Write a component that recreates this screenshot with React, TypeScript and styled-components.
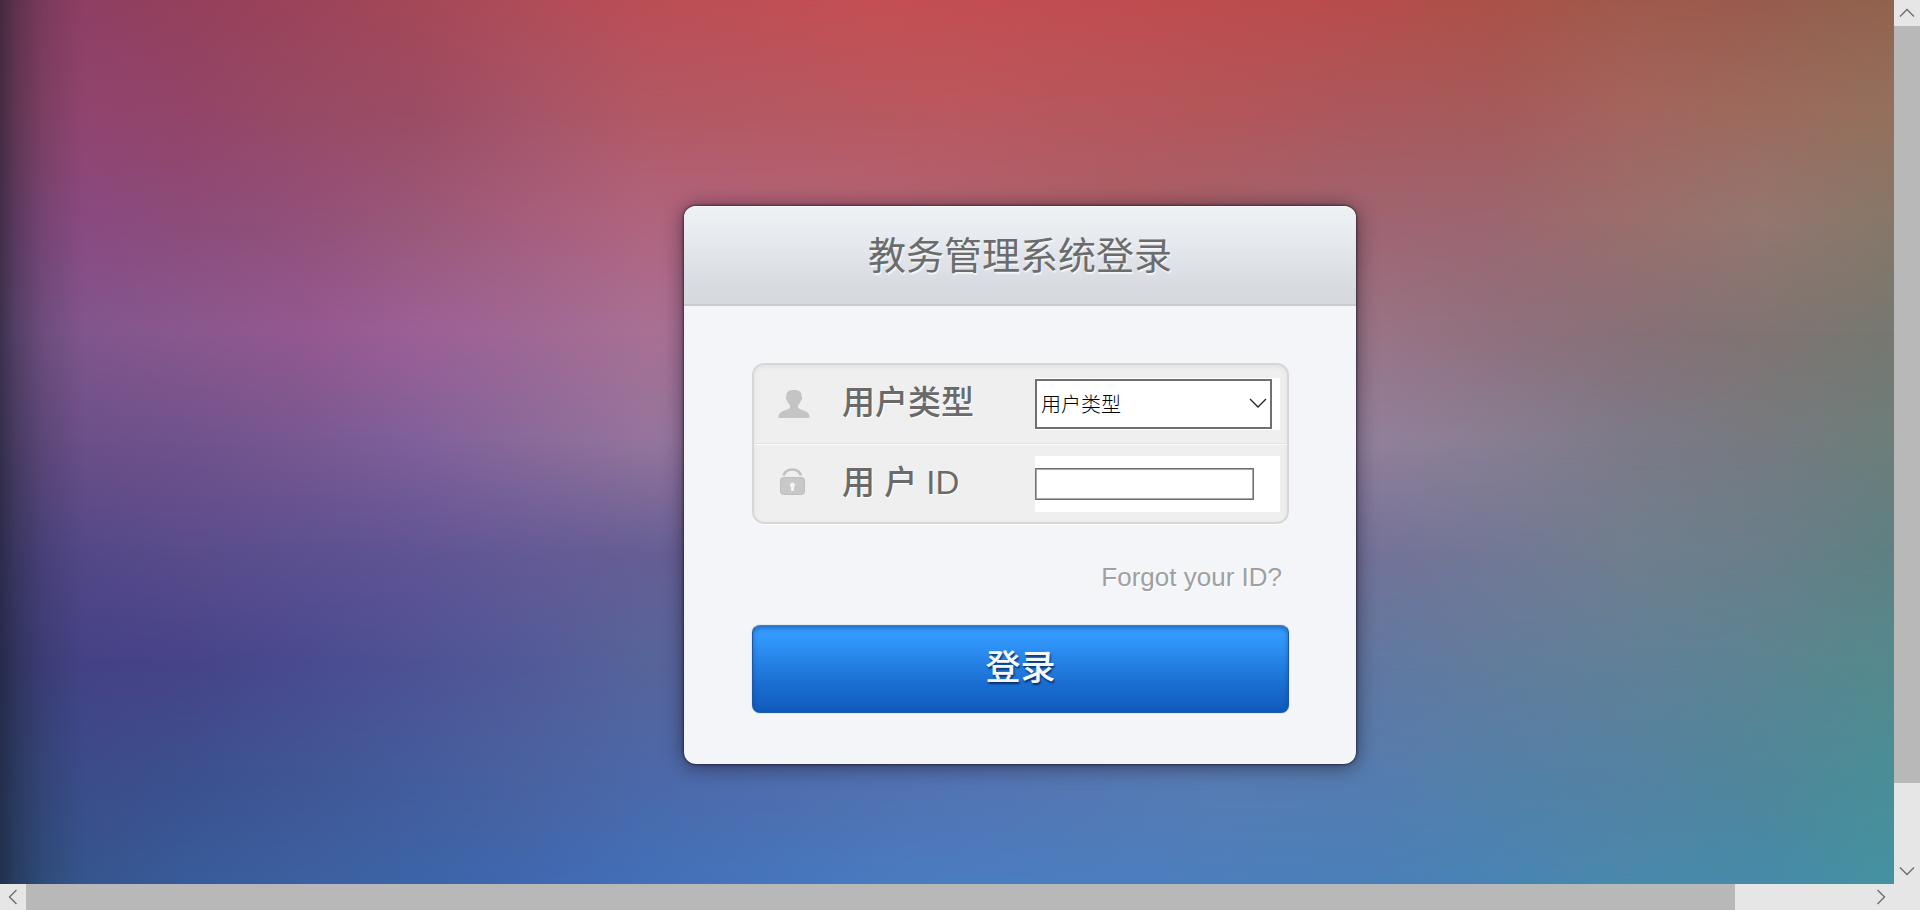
import React from "react";
import styled, { createGlobalStyle } from "styled-components";

const GlobalStyle = createGlobalStyle`
  *, *::before, *::after { box-sizing: border-box; }
  body { margin: 0; font-family: "Liberation Sans", "Noto Sans CJK SC", sans-serif; }
`;

const Frame = styled.div`
  display: grid;
  grid-template-columns: minmax(0, 1fr) 26px;
  grid-template-rows: minmax(0, 1fr) 26px;
  min-height: 100vh;
`;

const Viewport = styled.div`
  display: grid;
  min-width: 0;
`;

/* Each band is a horizontal colour ramp that fades in over the one above it. */
const Band = styled.div<{ $colors: string; $from: number; $to: number }>`
  grid-area: 1 / 1;
  background: linear-gradient(to right, ${(p) => p.$colors});
  mask-image: ${(p) =>
    p.$to === 0
      ? "none"
      : `linear-gradient(to bottom, transparent ${p.$from}%, black ${p.$to}%)`};
`;

const EdgeShade = styled.div`
  grid-area: 1 / 1;
  z-index: 1;
  background: linear-gradient(
    to right,
    rgba(24, 28, 40, 0.62) 0,
    rgba(28, 32, 44, 0.4) 16px,
    rgba(32, 36, 48, 0.16) 44px,
    transparent 84px
  );
`;

const Stage = styled.main`
  grid-area: 1 / 1;
  z-index: 2;
  display: flex;
  align-items: center;
  justify-content: center;
  padding: 86px 0 0 146px;
`;

const Card = styled.form`
  width: 672px;
  max-width: 100%;
  border-radius: 12px;
  background: #f3f5f8;
  box-shadow: 0 0 2px 1px rgba(30, 20, 40, 0.6), 0 2px 20px rgba(20, 15, 30, 0.6);
`;

const Header = styled.header`
  display: flex;
  align-items: center;
  justify-content: center;
  height: 100px;
  border-top: 1px solid #f6f8f9;
  border-bottom: 2px solid #c9cdd1;
  border-radius: 12px 12px 0 0;
  background: linear-gradient(#ecf1f4 0%, #e8ecf1 28%, #d8dbe1 80%, #d6dade 100%);
`;

const Title = styled.h1`
  margin: 0;
  font-size: 38px;
  font-weight: 400;
  line-height: 48px;
  color: #6c6c6c;
  text-shadow: 1px 2px 1px #f4f6f8;
`;

const Body = styled.div`
  display: flex;
  flex-direction: column;
  padding: 57px 67px 51px 68px;
`;

const Fields = styled.div`
  border: 2px solid #d6d7d9;
  border-radius: 12px;
  background: #efefef;
  box-shadow: inset 0 2px 5px rgba(0, 0, 0, 0.06), 0 1px 1px #ffffff;
`;

const Row = styled.div`
  display: grid;
  grid-template-columns: 32px minmax(0, 1fr) 245px;
  column-gap: 32px;
  align-items: center;
  height: 79px;
  padding: 0 7px 2px 24px;

  & + & {
    height: 78px;
    padding-bottom: 0;
    border-top: 1px solid #fafafa;
    box-shadow: 0 -1px 0 #e2e2e2;
  }
`;

const Label = styled.label`
  padding-bottom: 2px;
  font-size: 33px;
  font-weight: 500;
  line-height: 40px;
  white-space: pre;
  color: #6a6a6a;
  text-shadow: 1px 1px 1px #ffffff;
`;

const FieldBox = styled.div<{ $tall?: boolean }>`
  position: relative;
  display: flex;
  align-items: center;
  height: ${(p) => (p.$tall ? 56 : 52)}px;
  background: #ffffff;
`;

const Select = styled.select`
  appearance: none;
  width: 237px;
  height: 50px;
  padding: 0 32px 0 4px;
  border: 2px solid #707070;
  border-radius: 0;
  background: #ffffff;
  color: #000000;
  font-family: "Noto Sans CJK SC", sans-serif;
  font-size: 20px;
  font-weight: 300;
`;

const SelectArrow = styled.svg`
  position: absolute;
  top: 20px;
  right: 13px;
  pointer-events: none;
`;

const TextInput = styled.input`
  width: 219px;
  height: 32px;
  padding: 0 4px;
  border: 1px solid #707070;
  border-radius: 0;
  background: #ffffff;
  box-shadow: inset 0 0 0 1px #a8a8a8;
  font-size: 20px;
`;

const ForgotLink = styled.a`
  align-self: flex-end;
  margin: 37px 7px 32px 0;
  font-size: 26px;
  line-height: 32px;
  color: #a0a0a0;
  text-decoration: none;
  text-shadow: 1px 1px 1px #ffffff;
`;

const LoginButton = styled.button`
  height: 88px;
  padding: 0 0 8px;
  border: 1px solid #1c58a4;
  border-top-color: #4c7cb0;
  border-radius: 8px;
  background: linear-gradient(#3399fe 10%, #2e92f6 22%, #1b6fd2 66%, #0f5bbd 100%);
  box-shadow: inset 0 2px 4px rgba(10, 60, 120, 0.5), 0 0 1px #5c7c9c;
  color: #f4f8fc;
  font-family: "Noto Sans CJK SC", sans-serif;
  font-size: 35px;
  font-weight: 500;
  line-height: 40px;
  text-shadow: 1px 2px 2px rgba(0, 20, 60, 0.7);
`;

const Track = styled.div<{ $vertical?: boolean }>`
  display: flex;
  flex-direction: ${(p) => (p.$vertical ? "column" : "row")};
  background: #e6e6e6;
`;

const TrackBody = styled.div<{ $vertical?: boolean }>`
  display: flex;
  flex: 1;
  flex-direction: ${(p) => (p.$vertical ? "column" : "row")};
`;

const Thumb = styled.div<{ $share: number }>`
  flex: 0 0 ${(p) => p.$share}%;
  background: #b8b8b8;
`;

const StepButton = styled.button`
  display: flex;
  align-items: center;
  justify-content: center;
  width: 26px;
  height: 26px;
  padding: 0;
  border: 0;
  background: #e6e6e6;
`;

const Corner = styled.div`
  background: #e6e6e6;
`;

const BANDS: string[] = [
  "#8a3e62 0%, #8f3f62 5%, #95405c 10%, #9b445a 16%, #a44858 22%, #b04c58 28%, #bb4e56 34%, #c44f54 46%, #c04c50 60%, #b84c4c 72%, #aa5248 79%, #a05a4c 86%, #985c4e 93%, #90644e 100%",
  "#8e446c 0%, #91446e 5%, #934468 10%, #984a64 16%, #9c4c64 22%, #a65468 28%, #b25864 34%, #ba585e 50%, #b2565a 66%, #aa585c 72%, #a65a5a 79%, #a4645e 86%, #9c6a5c 93%, #94705c 100%",
  "#864a80 0%, #8a4a80 5%, #8c4c7a 10%, #92507a 16%, #9a5878 22%, #a65e7c 28%, #b0647e 34%, #b26478 45%, #a86068 60%, #a06472 72%, #9c6670 79%, #9a6e6c 86%, #947670 93%, #867868 100%",
  "#78548c 0%, #82568e 5%, #8a588e 10%, #945890 16%, #9c6096 22%, #a06894 28%, #a87094 34%, #a87090 50%, #9a7486 72%, #90707e 79%, #887078 86%, #807472 93%, #767870 100%",
  "#644c84 0%, #6c5088 5%, #70528c 10%, #785890 16%, #80609a 22%, #8a6a9a 28%, #94749c 34%, #9478a0 50%, #92809c 72%, #887e92 79%, #7c7a88 86%, #767a80 93%, #6c7e7a 100%",
  "#4c4484 0%, #544888 5%, #5a4c8c 10%, #5c5090 16%, #605494 22%, #645a96 28%, #665e94 34%, #706898 50%, #747298 72%, #727896 79%, #707e8e 86%, #6a7e8a 93%, #5e8082 100%",
  "#3e4080 0%, #444286 5%, #464488 10%, #4a4a90 16%, #4e5294 22%, #525a98 28%, #56649a 34%, #5e6ca0 50%, #6078a2 72%, #627c9c 79%, #608098 86%, #5c8492 93%, #548a8c 100%",
  "#344a82 0%, #3c4c8a 5%, #3c508e 10%, #405694 16%, #445c9c 22%, #4a62a0 28%, #4c68a8 34%, #5472b2 50%, #587cb2 64%, #567cb0 72%, #5480a8 79%, #5482a2 86%, #50869a 93%, #4a8e96 100%",
  "#2e5084 0%, #36568e 5%, #385c9a 10%, #3c60a0 16%, #3c64a8 22%, #4068b0 28%, #4270b8 34%, #4a7cc0 48%, #4c7ebe 62%, #4a80b8 72%, #4884b4 79%, #4a88ac 86%, #468aa8 93%, #4492a2 100%",
];

const STEP = 100 / (BANDS.length - 1);

const ARROWS = {
  up: "M1 8.5 8 1.5 15 8.5",
  down: "M1 1.5 8 8.5 15 1.5",
  left: "M8.5 1 1.5 8 8.5 15",
  right: "M1.5 1 8.5 8 1.5 15",
};

function Arrow({ dir }: { dir: keyof typeof ARROWS }) {
  const vertical = dir === "up" || dir === "down";
  return (
    <svg width={vertical ? 16 : 10} height={vertical ? 10 : 16} fill="none" aria-hidden="true">
      <path d={ARROWS[dir]} stroke="#6e6e6e" strokeWidth="1.4" />
    </svg>
  );
}

function UserIcon() {
  return (
    <svg width="32" height="30" viewBox="0 0 32 30" aria-hidden="true">
      <path
        d="M16 1c-5 0-7.600 1.600-7.400 5 0 1.400-.9 1.600-.8 3 .1 1.600 1 2 1.500 3.200.6 1.800 1.700 2.600 2.700 4.200.6 2-.6 3.200-2.800 4C5 21.900.4 22.600.4 29h31.200c0-6.400-4.600-7.100-8.800-8.600-2.200-.8-3.400-2-2.800-4 1-1.600 2.100-2.400 2.700-4.200.5-1.200 1.400-1.600 1.500-3.200.1-1.400-.8-1.600-.8-3C23.600 2.600 21 1 16 1Z"
        fill="#c4c4c4"
      />
    </svg>
  );
}

function LockIcon() {
  return (
    <svg width="32" height="32" viewBox="0 0 32 32" aria-hidden="true">
      <path d="M5.500 7.500C7 3.200 10.200 1.500 14.500 1.500s7 1.700 8.500 6" fill="none" stroke="#c0c0c0" strokeWidth="2.600" />
      <rect x="2.500" y="9.500" width="24" height="17" rx="3" fill="#c8c8c8" stroke="#bebebe" />
      <path
        d="M14.500 14.600a2.600 2.600 0 0 0-1.500 4.700V23h3V19.300a2.600 2.600 0 0 0-1.500-4.700Z"
        fill="#f4f4f4"
      />
    </svg>
  );
}

export default function App() {
  return (
    <>
      <GlobalStyle />
      <Frame>
        <Viewport>
          {BANDS.map((colors, i) => (
            <Band key={i} $colors={colors} $from={(i - 1) * STEP} $to={i * STEP} />
          ))}
          <EdgeShade />
          <Stage>
            <Card onSubmit={(e) => e.preventDefault()}>
              <Header>
                <Title>教务管理系统登录</Title>
              </Header>
              <Body>
                <Fields>
                  <Row>
                    <UserIcon />
                    <Label htmlFor="user-type">用户类型</Label>
                    <FieldBox>
                      <Select id="user-type">
                        <option>用户类型</option>
                      </Select>
                      <SelectArrow width="18" height="11" fill="none" aria-hidden="true">
                        <path d="M1 1 9 9 17 1" stroke="#222222" strokeWidth="1.3" />
                      </SelectArrow>
                    </FieldBox>
                  </Row>
                  <Row>
                    <LockIcon />
                    <Label htmlFor="user-id">用 户 ID</Label>
                    <FieldBox $tall>
                      <TextInput id="user-id" type="text" />
                    </FieldBox>
                  </Row>
                </Fields>
                <ForgotLink href="#forgot">Forgot your ID?</ForgotLink>
                <LoginButton type="submit">登录</LoginButton>
              </Body>
            </Card>
          </Stage>
        </Viewport>
        <Track $vertical>
          <StepButton type="button" aria-label="Scroll up">
            <Arrow dir="up" />
          </StepButton>
          <TrackBody $vertical>
            <Thumb $share={91} />
          </TrackBody>
          <StepButton type="button" aria-label="Scroll down">
            <Arrow dir="down" />
          </StepButton>
        </Track>
        <Track>
          <StepButton type="button" aria-label="Scroll left">
            <Arrow dir="left" />
          </StepButton>
          <TrackBody>
            <Thumb $share={92.8} />
          </TrackBody>
          <StepButton type="button" aria-label="Scroll right">
            <Arrow dir="right" />
          </StepButton>
        </Track>
        <Corner />
      </Frame>
    </>
  );
}
